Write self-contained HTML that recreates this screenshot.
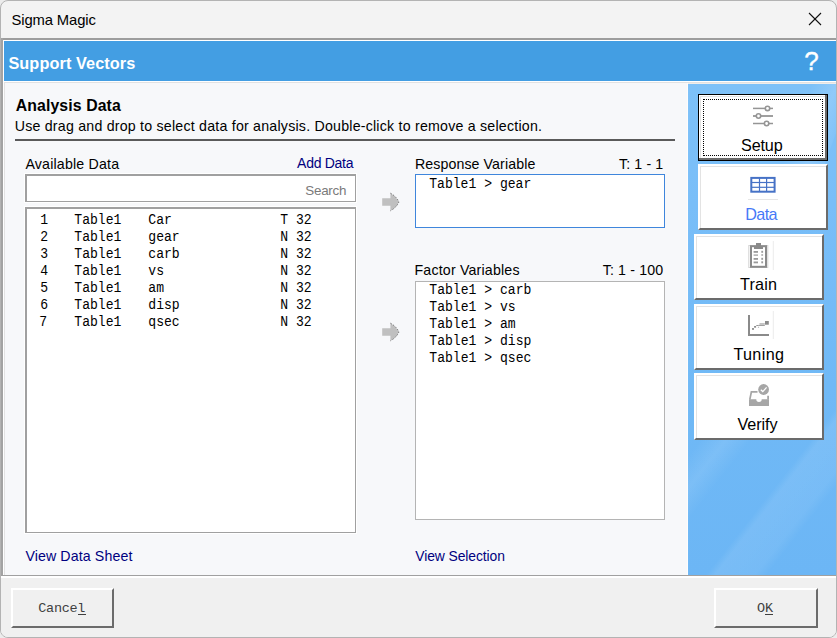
<!DOCTYPE html>
<html><head><meta charset="utf-8">
<style>
html,body{margin:0;padding:0;}
body{width:837px;height:638px;overflow:hidden;position:relative;background:#ececec;}
.a{position:absolute;box-sizing:border-box;}
.t{position:absolute;white-space:pre;}
.win{left:0;top:0;width:837px;height:638px;border:1px solid #b3b3b3;border-radius:8px;background:#f3f3f3;overflow:hidden;}
.btn{background:#fff;border-top:2px solid #fff;border-left:2px solid #fff;border-right:2px solid #6b6b6b;border-bottom:2px solid #6b6b6b;}
.btn:after{content:"";position:absolute;left:0;top:0;right:0;bottom:0;border-top:1px solid #e3e3e3;border-left:1px solid #e3e3e3;}
.lb{background:#fff;border-top:2px solid #a0a0a0;border-left:2px solid #a0a0a0;border-right:1px solid #a0a0a0;border-bottom:1px solid #a0a0a0;}
.cbtn{background:#f0f0f0;border-top:2px solid #fff;border-left:2px solid #fff;border-right:2px solid #6b6b6b;border-bottom:2px solid #6b6b6b;}
</style></head><body>
<div class="a win"></div>
<!-- close X -->
<svg class="a" style="left:0;top:0" width="837" height="638">
  <line x1="809" y1="13" x2="821" y2="25" stroke="#111" stroke-width="1.1"/>
  <line x1="821" y1="13" x2="809" y2="25" stroke="#111" stroke-width="1.1"/>
</svg>
<!-- form frame -->
<div class="a" style="left:1px;top:38px;width:835px;height:2px;background:#9d9d9d"></div>
<div class="a" style="left:1px;top:38px;width:2px;height:538px;background:#a3a3a3"></div>
<div class="a" style="left:3px;top:40px;width:833px;height:1px;background:#fff"></div>
<div class="a" style="left:3px;top:40px;width:1px;height:535px;background:#fff"></div>
<!-- blue header -->
<div class="a" style="left:4px;top:41px;width:832px;height:40px;background:#439ee3"></div>
<div class="a" style="left:4px;top:81px;width:832px;height:1px;background:#fff"></div>
<div class="a" style="left:4px;top:82px;width:832px;height:1px;background:#e2e2e2"></div>
<div class="a" style="left:4px;top:82px;width:1px;height:493px;background:#e2e2e2"></div>
<!-- content -->
<div class="a" style="left:5px;top:83px;width:683px;height:492px;background:#f7f8fa"></div>
<div class="a" style="left:687px;top:83px;width:1px;height:492px;background:#fdfdfd"></div>
<div class="a" style="left:688px;top:83px;width:148px;height:1px;background:#efedeb"></div>
<!-- right panel -->
<div class="a" style="left:688px;top:84px;width:148px;height:491px;overflow:hidden;background:linear-gradient(180deg,#7dc1f8 0px,#79bef8 120px,#70b9f6 300px,#6cb6f5 491px)">
  <div class="a" style="left:-10px;top:0;width:12px;height:491px;background:linear-gradient(90deg,rgba(255,255,255,0.18),rgba(255,255,255,0))"></div>
  <div class="a" style="left:72px;top:220px;width:48px;height:420px;transform:rotate(38deg);transform-origin:50% 50%;background:linear-gradient(90deg,rgba(255,255,255,0) 0%,rgba(255,255,255,0.09) 15%,rgba(255,255,255,0.07) 80%,rgba(255,255,255,0) 100%)"></div>
  <div class="a" style="left:-40px;top:300px;width:40px;height:260px;transform:rotate(38deg);background:linear-gradient(90deg,rgba(255,255,255,0) 0%,rgba(255,255,255,0.10) 50%,rgba(255,255,255,0) 100%)"></div>
  <div class="a" style="left:110px;top:-60px;width:40px;height:200px;transform:rotate(20deg);background:linear-gradient(90deg,rgba(255,255,255,0) 0%,rgba(255,255,255,0.15) 60%,rgba(255,255,255,0.05) 100%)"></div>
</div>
<!-- bottom bar -->
<div class="a" style="left:1px;top:575px;width:835px;height:1px;background:#a0a0a0"></div>
<div class="a" style="left:1px;top:576px;width:835px;height:2px;background:#fff"></div>
<div class="a" style="left:1px;top:578px;width:835px;height:59px;background:#f0f0f0;border-radius:0 0 7px 7px"></div>

<!-- separator -->
<div class="a" style="left:15px;top:139px;width:660px;height:2px;background:#5a5a5a"></div>
<!-- 3d highlights -->
<div class="a" style="left:24px;top:173px;width:333px;height:30px;background:#fff"></div>
<div class="a" style="left:24px;top:206px;width:333px;height:328px;background:#fff"></div>
<!-- search box -->
<div class="a lb" style="left:25px;top:174px;width:331px;height:28px;"></div>
<!-- listbox -->
<div class="a lb" style="left:25px;top:207px;width:331px;height:326px;"></div>
<!-- response box -->
<div class="a" style="left:415px;top:174px;width:250px;height:54px;background:#fff;border:1px solid #3f86dc"></div>
<!-- factor box -->
<div class="a" style="left:415px;top:281px;width:250px;height:239px;background:#fff;border:1px solid #b4b4b4"></div>
<!-- arrows -->
<svg class="a" style="left:380px;top:191px" width="22" height="22" viewBox="0 0 22 22">
  <path d="M2.2 7.2 H10.4 V2.2 Q16.5 5.5 18.9 11 Q16.5 16.5 10.4 19.8 V14.8 H2.2 Z" fill="#c0c0c0"/>
  <path d="M10.4 2.2 Q16.5 5.5 18.9 11 Q16.5 16.5 10.4 19.8" fill="none" stroke="#555" stroke-width="0.8" stroke-dasharray="1.5 1.5"/>
</svg>
<svg class="a" style="left:380px;top:321px" width="22" height="22" viewBox="0 0 22 22">
  <path d="M2.2 7.2 H10.4 V2.2 Q16.5 5.5 18.9 11 Q16.5 16.5 10.4 19.8 V14.8 H2.2 Z" fill="#c0c0c0"/>
  <path d="M10.4 2.2 Q16.5 5.5 18.9 11 Q16.5 16.5 10.4 19.8" fill="none" stroke="#555" stroke-width="0.8" stroke-dasharray="1.5 1.5"/>
</svg>

<!-- Setup button (focused) -->
<div class="a" style="left:698px;top:94px;width:130px;height:67px;border:1px solid #000;background:#fff"></div>
<div class="a" style="left:699px;top:95px;width:128px;height:65px;background:#fff;border-right:2px solid #6b6b6b;border-bottom:2px solid #6b6b6b"></div>
<div class="a" style="left:700px;top:96px;width:125px;height:1px;background:#e3e3e3"></div>
<div class="a" style="left:700px;top:96px;width:1px;height:62px;background:#e3e3e3"></div>
<div class="a" style="left:703px;top:99px;width:120px;height:57px;border:1px dotted #000"></div>
<svg class="a" style="left:748px;top:102px" width="30" height="28" viewBox="0 0 30 28">
  <g stroke="#959595" fill="none">
   <line x1="5" y1="6.4" x2="25" y2="6.4" stroke-width="1.5"/>
   <line x1="5" y1="14" x2="25" y2="14" stroke-width="1.8"/>
   <line x1="5" y1="21.5" x2="25" y2="21.5" stroke-width="1.5"/>
  </g>
  <g stroke="#959595" fill="#fff" stroke-width="1.6">
   <circle cx="19.5" cy="6.4" r="2.2"/>
   <circle cx="10.5" cy="14" r="2.2"/>
   <circle cx="18.6" cy="21.5" r="2.2"/>
  </g>
</svg>

<!-- Data button -->
<div class="a btn" style="left:698px;top:164px;width:130px;height:66px;"></div>
<svg class="a" style="left:745px;top:172px" width="36" height="32" viewBox="0 0 36 32">
  <rect x="6.3" y="5.9" width="23.3" height="13.8" fill="none" stroke="#4672c6" stroke-width="2"/>
  <line x1="14.5" y1="6" x2="14.5" y2="20" stroke="#4672c6" stroke-width="1.2"/>
  <line x1="21.6" y1="6" x2="21.6" y2="20" stroke="#4672c6" stroke-width="1.2"/>
  <line x1="6" y1="10.5" x2="30" y2="10.5" stroke="#4672c6" stroke-width="1.2"/>
  <line x1="6" y1="15.3" x2="30" y2="15.3" stroke="#4672c6" stroke-width="1.2"/>
  <line x1="3" y1="27.5" x2="33" y2="27.5" stroke="#e6e6e6" stroke-width="1"/>
</svg>

<!-- Train button -->
<div class="a btn" style="left:694px;top:234px;width:130px;height:66px;"></div>
<svg class="a" style="left:744px;top:239px" width="34" height="34" viewBox="0 0 34 34">
  <rect x="4.8" y="6.5" width="19" height="22" fill="none" stroke="#d4d4d4" stroke-width="1"/>
  <rect x="7" y="7.2" width="15" height="20.6" fill="#fff" stroke="#8a8a8a" stroke-width="2"/>
  <rect x="12" y="4" width="5" height="6" fill="#8a8a8a"/>
  <rect x="10" y="8" width="9" height="2" fill="#8a8a8a"/>
  <g fill="#9a9a9a">
   <rect x="9.6" y="12" width="4.4" height="1.8"/><rect x="17.3" y="11.8" width="1.8" height="2"/>
   <rect x="9.6" y="15.5" width="4.4" height="1.2"/><rect x="17.3" y="15.3" width="1.8" height="1.4"/>
   <rect x="9.6" y="19" width="4.4" height="1.8"/><rect x="17.3" y="18.8" width="1.8" height="2"/>
   <rect x="9.6" y="22.5" width="4.4" height="1.8"/><rect x="17.3" y="22.3" width="1.8" height="2"/>
  </g>
  <line x1="29.3" y1="2" x2="29.3" y2="31" stroke="#ececec" stroke-width="1"/>
</svg>

<!-- Tuning button -->
<div class="a btn" style="left:694px;top:304px;width:130px;height:66px;"></div>
<svg class="a" style="left:744px;top:310px" width="34" height="34" viewBox="0 0 34 34">
  <path d="M5 5 V25 H25" fill="none" stroke="#8a8a8a" stroke-width="2" />
  <rect x="8" y="18.1" width="2" height="1.7" fill="#8a8a8a"/>
  <rect x="10.1" y="16" width="2" height="1.7" fill="#8a8a8a"/>
  <rect x="12.3" y="15.1" width="2.2" height="0.9" fill="#8a8a8a"/>
  <rect x="13.9" y="16.8" width="1.2" height="0.8" fill="#9a9a9a"/>
  <rect x="15.5" y="13" width="5.3" height="1.8" fill="#c4c4c4"/>
  <rect x="14.5" y="14.9" width="6.3" height="0.9" fill="#8a8a8a"/>
  <rect x="21" y="11" width="3.8" height="3.7" fill="#8a8a8a"/>
  <line x1="29.3" y1="1" x2="29.3" y2="29" stroke="#ececec" stroke-width="1"/>
</svg>

<!-- Verify button -->
<div class="a btn" style="left:694px;top:373px;width:130px;height:67px;"></div>
<svg class="a" style="left:744px;top:378px" width="34" height="34" viewBox="0 0 34 34">
  <path d="M5 28 V21.3 H12.3 A2.7 2.7 0 0 0 17.7 21.3 H25 V28 Z" fill="#a6a6a6"/>
  <path d="M5.8 21.5 L7.4 13.8 H13.5" fill="none" stroke="#a6a6a6" stroke-width="1.7"/>
  <path d="M24.1 17.8 V21.5" fill="none" stroke="#a6a6a6" stroke-width="1.8"/>
  <circle cx="19.6" cy="11.5" r="5.4" fill="#a6a6a6"/>
  <path d="M16.8 11.8 L18.8 13.6 L22.6 9.4" fill="none" stroke="#fff" stroke-width="1.3"/>
</svg>

<!-- Cancel / OK -->
<div class="a cbtn" style="left:11px;top:588px;width:103px;height:40px;"></div>
<div class="a cbtn" style="left:714px;top:588px;width:104px;height:40px;"></div>
<div class="a" style="left:78px;top:614px;width:8px;height:1px;background:#404040"></div>
<div class="a" style="left:765px;top:614px;width:8px;height:1px;background:#404040"></div>

<div class="t" style="left:11.60px;top:9.57px;font-family:'Liberation Sans',sans-serif;font-weight:normal;font-size:14.8px;line-height:21px;color:#000;letter-spacing:-0.132px;">Sigma Magic</div>
<div class="t" style="left:8.40px;top:51.55px;font-family:'Liberation Sans',sans-serif;font-weight:bold;font-size:16.3px;line-height:23px;color:#ffffff;letter-spacing:0.086px;">Support Vectors</div>
<div class="t" style="left:15.70px;top:95.33px;font-family:'Liberation Sans',sans-serif;font-weight:bold;font-size:15.8px;line-height:22px;color:#000;letter-spacing:0.123px;">Analysis Data</div>
<div class="t" style="left:14.70px;top:116.18px;font-family:'Liberation Sans',sans-serif;font-weight:normal;font-size:14.2px;line-height:20px;color:#000;letter-spacing:0.220px;">Use drag and drop to select data for analysis. Double-click to remove a selection.</div>
<div class="t" style="left:25.40px;top:154.18px;font-family:'Liberation Sans',sans-serif;font-weight:normal;font-size:14.2px;line-height:20px;color:#000;letter-spacing:0.189px;">Available Data</div>
<div class="t" style="left:297.10px;top:153.45px;font-family:'Liberation Sans',sans-serif;font-weight:normal;font-size:14.0px;line-height:20px;color:#000080;letter-spacing:-0.284px;">Add Data</div>
<div class="t" style="left:305.30px;top:181.26px;font-family:'Liberation Sans',sans-serif;font-weight:normal;font-size:13.4px;line-height:19px;color:#7a7a7a;letter-spacing:-0.256px;">Search</div>
<div class="t" style="left:414.90px;top:154.28px;font-family:'Liberation Sans',sans-serif;font-weight:normal;font-size:14.2px;line-height:20px;color:#000;letter-spacing:0.098px;">Response Variable</div>
<div class="t" style="left:619.00px;top:154.28px;font-family:'Liberation Sans',sans-serif;font-weight:normal;font-size:14.2px;line-height:20px;color:#000;letter-spacing:0.118px;">T: 1 - 1</div>
<div class="t" style="left:414.50px;top:260.18px;font-family:'Liberation Sans',sans-serif;font-weight:normal;font-size:14.2px;line-height:20px;color:#000;letter-spacing:0.183px;">Factor Variables</div>
<div class="t" style="left:602.70px;top:260.38px;font-family:'Liberation Sans',sans-serif;font-weight:normal;font-size:14.2px;line-height:20px;color:#000;letter-spacing:0.149px;">T: 1 - 100</div>
<div class="t" style="left:25.40px;top:545.88px;font-family:'Liberation Sans',sans-serif;font-weight:normal;font-size:14.2px;line-height:20px;color:#000080;letter-spacing:0.109px;">View Data Sheet</div>
<div class="t" style="left:415.30px;top:546.58px;font-family:'Liberation Sans',sans-serif;font-weight:normal;font-size:13.9px;line-height:19px;color:#000080;letter-spacing:-0.095px;">View Selection</div>
<div class="t" style="left:741.10px;top:134.09px;font-family:'Liberation Sans',sans-serif;font-weight:normal;font-size:16.2px;line-height:23px;color:#000;letter-spacing:-0.175px;">Setup</div>
<div class="t" style="left:745.30px;top:203.09px;font-family:'Liberation Sans',sans-serif;font-weight:normal;font-size:16.2px;line-height:23px;color:#4779f7;letter-spacing:-0.663px;">Data</div>
<div class="t" style="left:740.00px;top:273.09px;font-family:'Liberation Sans',sans-serif;font-weight:normal;font-size:16.2px;line-height:23px;color:#000;letter-spacing:0.181px;">Train</div>
<div class="t" style="left:733.40px;top:343.09px;font-family:'Liberation Sans',sans-serif;font-weight:normal;font-size:16.2px;line-height:23px;color:#000;letter-spacing:0.342px;">Tuning</div>
<div class="t" style="left:737.40px;top:413.09px;font-family:'Liberation Sans',sans-serif;font-weight:normal;font-size:16.2px;line-height:23px;color:#000;letter-spacing:-0.058px;">Verify</div>
<div class="t" style="left:40.30px;top:211.61px;font-family:'Liberation Mono',monospace;font-weight:normal;font-size:13.1px;line-height:18px;color:#000;transform:scaleY(1.08);transform-origin:0 12.49px;">1</div>
<div class="t" style="left:74.30px;top:211.61px;font-family:'Liberation Mono',monospace;font-weight:normal;font-size:13.1px;line-height:18px;color:#000;transform:scaleY(1.08);transform-origin:0 12.49px;">Table1</div>
<div class="t" style="left:148.30px;top:211.61px;font-family:'Liberation Mono',monospace;font-weight:normal;font-size:13.1px;line-height:18px;color:#000;transform:scaleY(1.08);transform-origin:0 12.49px;">Car</div>
<div class="t" style="left:280.20px;top:211.61px;font-family:'Liberation Mono',monospace;font-weight:normal;font-size:13.1px;line-height:18px;color:#000;transform:scaleY(1.08);transform-origin:0 12.49px;">T 32</div>
<div class="t" style="left:40.30px;top:228.61px;font-family:'Liberation Mono',monospace;font-weight:normal;font-size:13.1px;line-height:18px;color:#000;transform:scaleY(1.08);transform-origin:0 12.49px;">2</div>
<div class="t" style="left:74.30px;top:228.61px;font-family:'Liberation Mono',monospace;font-weight:normal;font-size:13.1px;line-height:18px;color:#000;transform:scaleY(1.08);transform-origin:0 12.49px;">Table1</div>
<div class="t" style="left:148.30px;top:228.61px;font-family:'Liberation Mono',monospace;font-weight:normal;font-size:13.1px;line-height:18px;color:#000;transform:scaleY(1.08);transform-origin:0 12.49px;">gear</div>
<div class="t" style="left:280.20px;top:228.61px;font-family:'Liberation Mono',monospace;font-weight:normal;font-size:13.1px;line-height:18px;color:#000;transform:scaleY(1.08);transform-origin:0 12.49px;">N 32</div>
<div class="t" style="left:40.30px;top:245.61px;font-family:'Liberation Mono',monospace;font-weight:normal;font-size:13.1px;line-height:18px;color:#000;transform:scaleY(1.08);transform-origin:0 12.49px;">3</div>
<div class="t" style="left:74.30px;top:245.61px;font-family:'Liberation Mono',monospace;font-weight:normal;font-size:13.1px;line-height:18px;color:#000;transform:scaleY(1.08);transform-origin:0 12.49px;">Table1</div>
<div class="t" style="left:148.30px;top:245.61px;font-family:'Liberation Mono',monospace;font-weight:normal;font-size:13.1px;line-height:18px;color:#000;transform:scaleY(1.08);transform-origin:0 12.49px;">carb</div>
<div class="t" style="left:280.20px;top:245.61px;font-family:'Liberation Mono',monospace;font-weight:normal;font-size:13.1px;line-height:18px;color:#000;transform:scaleY(1.08);transform-origin:0 12.49px;">N 32</div>
<div class="t" style="left:40.30px;top:262.61px;font-family:'Liberation Mono',monospace;font-weight:normal;font-size:13.1px;line-height:18px;color:#000;transform:scaleY(1.08);transform-origin:0 12.49px;">4</div>
<div class="t" style="left:74.30px;top:262.61px;font-family:'Liberation Mono',monospace;font-weight:normal;font-size:13.1px;line-height:18px;color:#000;transform:scaleY(1.08);transform-origin:0 12.49px;">Table1</div>
<div class="t" style="left:148.30px;top:262.61px;font-family:'Liberation Mono',monospace;font-weight:normal;font-size:13.1px;line-height:18px;color:#000;transform:scaleY(1.08);transform-origin:0 12.49px;">vs</div>
<div class="t" style="left:280.20px;top:262.61px;font-family:'Liberation Mono',monospace;font-weight:normal;font-size:13.1px;line-height:18px;color:#000;transform:scaleY(1.08);transform-origin:0 12.49px;">N 32</div>
<div class="t" style="left:40.30px;top:279.61px;font-family:'Liberation Mono',monospace;font-weight:normal;font-size:13.1px;line-height:18px;color:#000;transform:scaleY(1.08);transform-origin:0 12.49px;">5</div>
<div class="t" style="left:74.30px;top:279.61px;font-family:'Liberation Mono',monospace;font-weight:normal;font-size:13.1px;line-height:18px;color:#000;transform:scaleY(1.08);transform-origin:0 12.49px;">Table1</div>
<div class="t" style="left:148.30px;top:279.61px;font-family:'Liberation Mono',monospace;font-weight:normal;font-size:13.1px;line-height:18px;color:#000;transform:scaleY(1.08);transform-origin:0 12.49px;">am</div>
<div class="t" style="left:280.20px;top:279.61px;font-family:'Liberation Mono',monospace;font-weight:normal;font-size:13.1px;line-height:18px;color:#000;transform:scaleY(1.08);transform-origin:0 12.49px;">N 32</div>
<div class="t" style="left:40.30px;top:296.61px;font-family:'Liberation Mono',monospace;font-weight:normal;font-size:13.1px;line-height:18px;color:#000;transform:scaleY(1.08);transform-origin:0 12.49px;">6</div>
<div class="t" style="left:74.30px;top:296.61px;font-family:'Liberation Mono',monospace;font-weight:normal;font-size:13.1px;line-height:18px;color:#000;transform:scaleY(1.08);transform-origin:0 12.49px;">Table1</div>
<div class="t" style="left:148.30px;top:296.61px;font-family:'Liberation Mono',monospace;font-weight:normal;font-size:13.1px;line-height:18px;color:#000;transform:scaleY(1.08);transform-origin:0 12.49px;">disp</div>
<div class="t" style="left:280.20px;top:296.61px;font-family:'Liberation Mono',monospace;font-weight:normal;font-size:13.1px;line-height:18px;color:#000;transform:scaleY(1.08);transform-origin:0 12.49px;">N 32</div>
<div class="t" style="left:39.30px;top:313.61px;font-family:'Liberation Mono',monospace;font-weight:normal;font-size:13.1px;line-height:18px;color:#000;transform:scaleY(1.08);transform-origin:0 12.49px;">7</div>
<div class="t" style="left:74.30px;top:313.61px;font-family:'Liberation Mono',monospace;font-weight:normal;font-size:13.1px;line-height:18px;color:#000;transform:scaleY(1.08);transform-origin:0 12.49px;">Table1</div>
<div class="t" style="left:148.30px;top:313.61px;font-family:'Liberation Mono',monospace;font-weight:normal;font-size:13.1px;line-height:18px;color:#000;transform:scaleY(1.08);transform-origin:0 12.49px;">qsec</div>
<div class="t" style="left:280.20px;top:313.61px;font-family:'Liberation Mono',monospace;font-weight:normal;font-size:13.1px;line-height:18px;color:#000;transform:scaleY(1.08);transform-origin:0 12.49px;">N 32</div>
<div class="t" style="left:38.30px;top:598.61px;font-family:'Liberation Mono',monospace;font-weight:normal;font-size:13.5px;line-height:19px;color:#404040;letter-spacing:-0.301px;">Cancel</div>
<div class="t" style="left:757.00px;top:598.61px;font-family:'Liberation Mono',monospace;font-weight:normal;font-size:13.5px;line-height:19px;color:#404040;">OK</div>
<div class="t" style="left:804.20px;top:43.39px;font-family:'Liberation Sans',sans-serif;font-weight:normal;font-size:26.0px;line-height:36px;color:#ffffff;-webkit-text-stroke:0.35px #fff;">?</div>
<div class="t" style="left:429.20px;top:176.41px;font-family:'Liberation Mono',monospace;font-weight:normal;font-size:13.1px;line-height:18px;color:#000;transform:scaleY(1.08);transform-origin:0 12.49px;">Table1 &gt; gear</div>
<div class="t" style="left:429.30px;top:282.01px;font-family:'Liberation Mono',monospace;font-weight:normal;font-size:13.1px;line-height:18px;color:#000;transform:scaleY(1.08);transform-origin:0 12.49px;">Table1 &gt; carb</div>
<div class="t" style="left:429.30px;top:299.01px;font-family:'Liberation Mono',monospace;font-weight:normal;font-size:13.1px;line-height:18px;color:#000;transform:scaleY(1.08);transform-origin:0 12.49px;">Table1 &gt; vs</div>
<div class="t" style="left:429.30px;top:316.01px;font-family:'Liberation Mono',monospace;font-weight:normal;font-size:13.1px;line-height:18px;color:#000;transform:scaleY(1.08);transform-origin:0 12.49px;">Table1 &gt; am</div>
<div class="t" style="left:429.30px;top:333.01px;font-family:'Liberation Mono',monospace;font-weight:normal;font-size:13.1px;line-height:18px;color:#000;transform:scaleY(1.08);transform-origin:0 12.49px;">Table1 &gt; disp</div>
<div class="t" style="left:429.30px;top:350.01px;font-family:'Liberation Mono',monospace;font-weight:normal;font-size:13.1px;line-height:18px;color:#000;transform:scaleY(1.08);transform-origin:0 12.49px;">Table1 &gt; qsec</div>
</body></html>
